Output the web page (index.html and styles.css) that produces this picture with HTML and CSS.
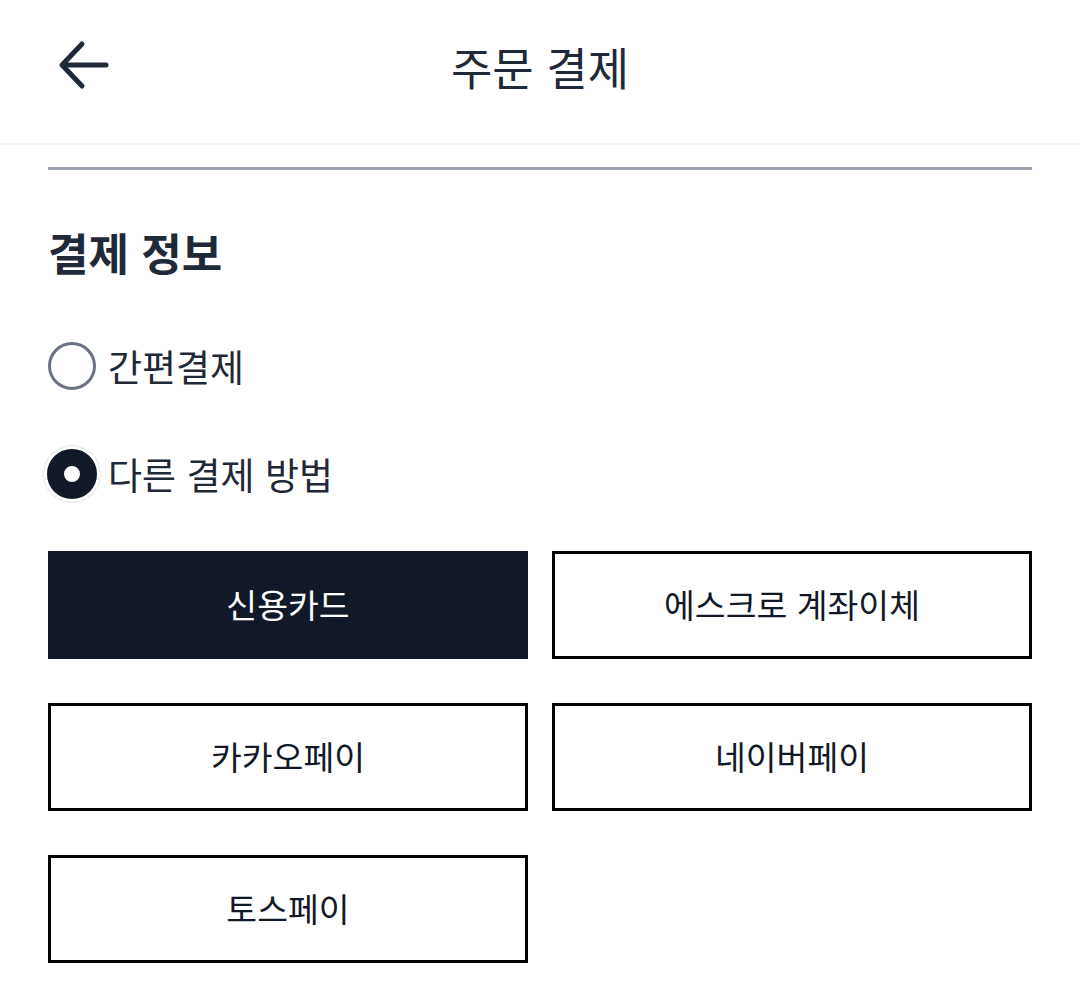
FILE: index.html
```html
<!DOCTYPE html>
<html lang="ko">
<head>
<meta charset="utf-8">
<title>주문 결제</title>
<link rel="stylesheet" href="styles.css">
</head>
<body>
<header class="topbar">
  <button class="back" aria-label="뒤로">
    <svg width="52" height="52" viewBox="0 0 52 52" fill="none" stroke="#1f2937" stroke-width="5" stroke-linecap="round" stroke-linejoin="round">
      <path d="M24 4 L4 25 L24 46"/>
      <path d="M5 25 H48"/>
    </svg>
  </button>
  <h1 class="title">주문 결제</h1>
</header>
<main class="content">
  <hr class="divider">
  <h2 class="section-title">결제 정보</h2>
  <div class="radio-group">
    <label class="radio-row">
      <span class="radio"></span>
      <span class="radio-label">간편결제</span>
    </label>
    <label class="radio-row">
      <span class="radio checked"></span>
      <span class="radio-label">다른 결제 방법</span>
    </label>
  </div>
  <div class="methods">
    <button class="method active">신용카드</button>
    <button class="method">에스크로 계좌이체</button>
    <button class="method">카카오페이</button>
    <button class="method">네이버페이</button>
    <button class="method">토스페이</button>
  </div>
</main>
</body>
</html>
```
FILE: styles.css
```css
* { box-sizing: border-box; }
html, body { margin: 0; padding: 0; background: #fff; }
body {
  font-family: "Noto Sans CJK KR", "Noto Sans", sans-serif;
  color: #1f2937;
}
.topbar {
  height: 145px;
  border-bottom: 2px solid #f3f4f6;
  display: flex;
  align-items: center;
  justify-content: center;
  position: relative;
}
.back {
  position: absolute;
  left: 58px;
  top: 40px;
  background: none;
  border: 0;
  padding: 0;
  width: 52px;
  height: 52px;
  display: flex;
}
.title {
  margin: 0;
  font-size: 45px;
  font-weight: 400;
  color: #1f2937;
  line-height: 1;
  transform: translateY(-5px);
}
.content {
  padding: 0 48px;
}
.divider {
  margin: 22px 0 0;
  border: 0;
  height: 3px;
  background: #9ca3af;
}
.section-title {
  margin: 58px 0 0;
  font-size: 44px;
  font-weight: 700;
  line-height: 48px;
  color: #1f2937;
}
.radio-group {
  margin-top: 66px;
  display: flex;
  flex-direction: column;
  gap: 60px;
}
.radio-row {
  display: flex;
  align-items: center;
  gap: 12px;
  height: 48px;
}
.radio {
  width: 48px;
  height: 48px;
  border-radius: 50%;
  border: 3px solid #6b7280;
  flex: none;
}
.radio.checked {
  width: 50px;
  height: 50px;
  margin-left: -1px;
  margin-right: -1px;
  border: 17px solid #111827;
  background: #fff;
  box-shadow: 0 0 0 3px #fff, 0 0 0 4px #e5e7eb;
}
.radio-label {
  font-size: 37px;
  line-height: 48px;
  color: #1f2937;
}
.methods {
  margin-top: 53px;
  display: grid;
  grid-template-columns: 1fr 1fr;
  column-gap: 24px;
  row-gap: 44px;
}
.method {
  height: 108px;
  border: 3px solid #000;
  background: #fff;
  font-family: inherit;
  font-size: 33.5px;
  color: #111827;
  padding: 0 0 4px;
}
.method.active {
  background: #111827;
  border-color: #111827;
  color: #fff;
}
```
